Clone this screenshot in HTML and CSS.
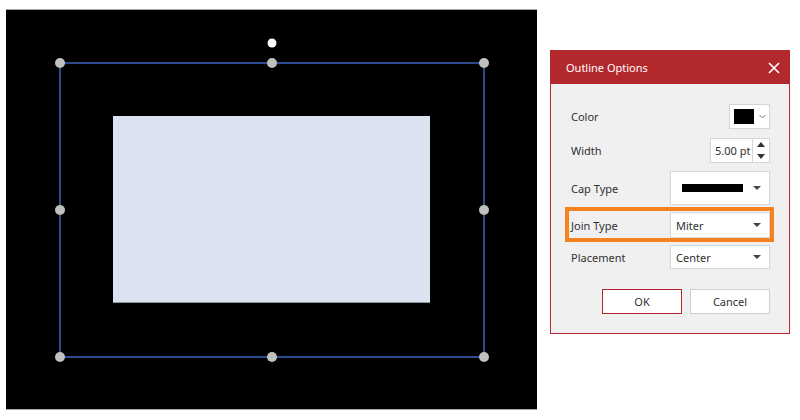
FILE: index.html
```html
<!DOCTYPE html>
<html lang="en">
<head>
  <meta charset="UTF-8">
  <meta name="viewport" content="width=device-width, initial-scale=1.0">
  <title>Outline Options</title>
  <link rel="stylesheet" href="styles.css">
</head>
<body>
  <div class="workspace">
    <div class="canvas">
      <svg width="531" height="399" viewBox="0 0 531 399">
        <rect x="107" y="106" width="317" height="187" fill="#dae3ef" />
        <line x1="107" y1="292.5" x2="424" y2="292.5" stroke="#8d96a3" stroke-width="1" />
        <rect x="54" y="53" width="424" height="294" fill="none" stroke="#2f4b8f" stroke-width="2" />
        <circle cx="266" cy="33" r="4.5" fill="#ffffff" />
        <g fill="#c0c0c0">
          <circle cx="54" cy="53" r="5" />
          <circle cx="266" cy="53" r="5" />
          <circle cx="478" cy="53" r="5" />
          <circle cx="54" cy="200" r="5" />
          <circle cx="478" cy="200" r="5" />
          <circle cx="54" cy="347" r="5" />
          <circle cx="266" cy="347" r="5" />
          <circle cx="478" cy="347" r="5" />
        </g>
      </svg>
    </div>

    <div class="dialog">
      <div class="dialog-header">
        <span class="dialog-title">Outline Options</span>
        <span class="close">
          <svg width="12" height="12" viewBox="0 0 12 12">
            <path d="M1 1 L11 11 M11 1 L1 11" stroke="#fff" stroke-width="1.6" />
          </svg>
        </span>
      </div>
      <div class="dialog-body">
        <div class="row row-color">
          <span class="label">Color</span>
          <div class="color-picker">
            <span class="swatch"></span>
            <svg width="7" height="5" viewBox="0 0 7 5">
              <path d="M0.5 1 L3.5 4 L6.5 1" fill="none" stroke="#777" stroke-width="1" />
            </svg>
          </div>
        </div>
        <div class="row row-width">
          <span class="label">Width</span>
          <div class="spinner">
            <span class="spinner-value">5.00 pt</span>
            <span class="spinner-buttons">
              <svg width="8" height="5" viewBox="0 0 8 5"><path d="M0 5 L4 0 L8 5 Z" fill="#333" /></svg>
              <svg width="8" height="5" viewBox="0 0 8 5"><path d="M0 0 L4 5 L8 0 Z" fill="#333" /></svg>
            </span>
          </div>
        </div>
        <div class="row row-cap">
          <span class="label">Cap Type</span>
          <div class="combo combo-cap">
            <span class="cap-line"></span>
            <span class="arrow"></span>
          </div>
        </div>
        <div class="row row-join highlighted">
          <span class="label">Join Type</span>
          <div class="combo">
            <span class="combo-text">Miter</span>
            <span class="arrow"></span>
          </div>
        </div>
        <div class="row row-placement">
          <span class="label">Placement</span>
          <div class="combo">
            <span class="combo-text">Center</span>
            <span class="arrow"></span>
          </div>
        </div>
        <div class="actions">
          <button type="button" class="btn btn-ok">OK</button>
          <button type="button" class="btn">Cancel</button>
        </div>
      </div>
    </div>
  </div>
</body>
</html>
```

FILE: styles.css
```css
body {
  margin: 0;
  background: #fff;
  font-family: "Noto Sans", "Open Sans", sans-serif;
  font-size: 11px;
  color: #303030;
}

.workspace {
  display: flex;
  align-items: flex-start;
  padding: 9px 0 0 6px;
}

.canvas {
  width: 531px;
  height: 399px;
  background: #000;
  border-top: 1px solid #a8a8a8;
  border-bottom: 1px solid #a8a8a8;
}

.canvas svg {
  display: block;
}

.dialog {
  box-sizing: border-box;
  width: 240px;
  margin: 41px 0 0 13px;
  border: 1px solid #b5292e;
  background: #f0f0f0;
}

.dialog-header {
  height: 33px;
  background: #b3282d;
  color: #fff;
  display: flex;
  align-items: center;
  justify-content: space-between;
  padding: 0 9px 0 15px;
}

.dialog-title {
  font-size: 11px;
}

.close {
  display: flex;
}

.dialog-body {
  padding: 20px 19px 19px 20px;
  display: flex;
  flex-direction: column;
}

.row {
  display: flex;
  align-items: center;
  justify-content: space-between;
  position: relative;
}

.row-width {
  margin-top: 9px;
}

.row-cap {
  margin-top: 8px;
}

.row-join,
.row-placement {
  margin-top: 7px;
}

.highlighted::after {
  content: "";
  position: absolute;
  top: -5px;
  left: -6px;
  right: -4px;
  bottom: -4px;
  border: 4px solid #f6821f;
  pointer-events: none;
}

.color-picker {
  box-sizing: border-box;
  width: 41px;
  height: 25px;
  background: #fff;
  border: 1px solid #d6d6d6;
  display: flex;
  align-items: center;
  padding-left: 4px;
  gap: 5px;
}

.swatch {
  width: 20px;
  height: 15px;
  background: #000;
}

.spinner {
  box-sizing: border-box;
  width: 60px;
  height: 25px;
  background: #fff;
  border: 1px solid #d6d6d6;
  display: flex;
}

.spinner-value {
  width: 37px;
  padding-left: 4px;
  border-right: 1px solid #d6d6d6;
  line-height: 23px;
  white-space: nowrap;
  overflow: hidden;
}

.spinner-buttons {
  flex: 1;
  display: flex;
  flex-direction: column;
  align-items: center;
  justify-content: center;
  gap: 7px;
}

.spinner-buttons svg {
  display: block;
}

.combo {
  box-sizing: border-box;
  width: 100px;
  height: 26px;
  background: #fff;
  border: 1px solid #d3d6dc;
  display: flex;
  align-items: center;
  justify-content: space-between;
  padding: 0 8px 0 5px;
}

.combo-cap {
  height: 34px;
  padding-left: 11px;
}

.row-placement .combo {
  height: 24px;
}

.cap-line {
  width: 61px;
  height: 8px;
  background: #000;
}

.arrow {
  width: 0;
  height: 0;
  border-left: 4px solid transparent;
  border-right: 4px solid transparent;
  border-top: 4px solid #444;
}

.actions {
  display: flex;
  justify-content: flex-end;
  gap: 8px;
  margin-top: 20px;
}

.btn {
  box-sizing: border-box;
  width: 80px;
  height: 25px;
  background: #fff;
  border: 1px solid #cfcfcf;
  font-family: inherit;
  font-size: 11px;
  color: #303030;
  padding: 0;
}

.btn-ok {
  border-color: #b3282d;
}
```
